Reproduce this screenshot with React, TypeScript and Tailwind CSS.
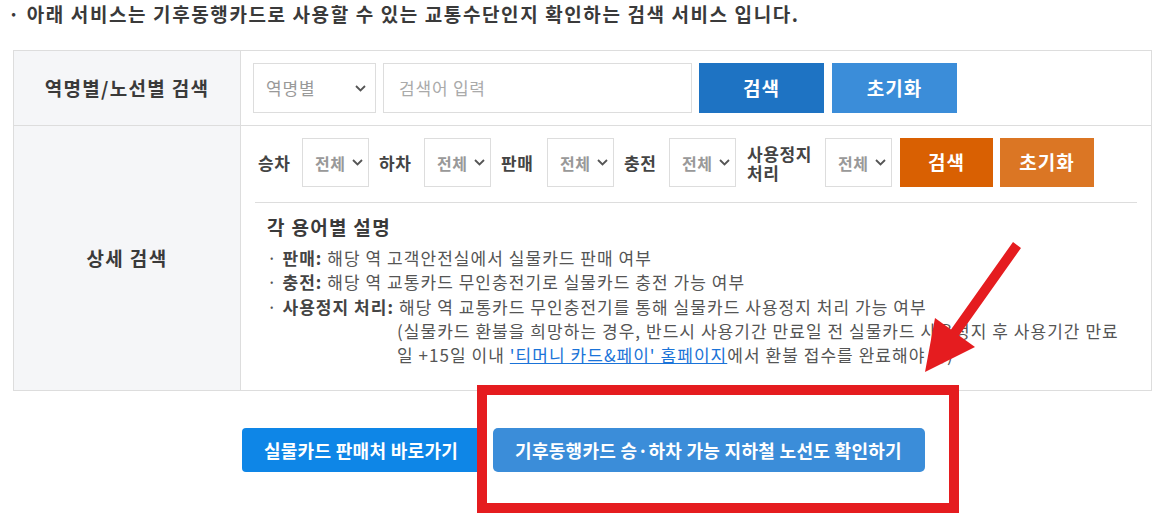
import React from "react";

const FONT = { fontFamily: "'Noto Sans CJK KR', 'Malgun Gothic', 'Noto Sans', sans-serif" };

function Chevron() {
  return (
    <svg width="11" height="7" viewBox="0 0 11 7">
      <path d="M1 1l4.5 4.5L10 1" fill="none" stroke="#555" strokeWidth="1.8" />
    </svg>
  );
}

function SmallSelect() {
  return (
    <div className="flex h-[49px] w-[67px] shrink-0 items-center justify-between border border-[#dddddd] bg-white pl-[12px] pr-[5px]">
      <span className="text-[16px] tracking-[0.5px] text-[#999999]">전체</span>
      <Chevron />
    </div>
  );
}

export default function App() {
  return (
    <div style={FONT} className="relative h-[513px] w-[1166px] overflow-hidden bg-white text-[#333333]">
      <p className="pl-[8px] pt-[1px] text-[19px] font-semibold leading-[26px] tracking-[1.6px] text-[#3a3a3a]">
        · 아래 서비스는 기후동행카드로 사용할 수 있는 교통수단인지 확인하는 검색 서비스 입니다.
      </p>

      <div className="mx-[13px] mt-[23px] w-[1139px] border border-[#dddddd]">
        <div className="grid grid-cols-[227px_1fr] border-b border-[#dddddd]">
          <div className="flex items-center justify-center border-r border-[#dddddd] bg-[#f5f6f8] text-[19px] font-bold tracking-[1.3px] text-[#3a3a3a]">
            역명별/노선별 검색
          </div>
          <div className="flex items-center gap-[7px] py-[12px] pl-[12px]">
            <div className="flex h-[50px] w-[123px] items-center justify-between border border-[#dddddd] pl-[12px] pr-[9px]">
              <span className="text-[17px] tracking-[0.8px] text-[#999999]">역명별</span>
              <Chevron />
            </div>
            <div className="flex h-[50px] w-[309px] items-center border border-[#dddddd] pl-[15px]">
              <span className="text-[17px] tracking-[0.8px] text-[#aaaaaa]">검색어 입력</span>
            </div>
            <button className="h-[50px] w-[125px] bg-[#1e73c3] text-[19px] font-bold tracking-[1px] text-white">검색</button>
            <button className="ml-[1px] h-[50px] w-[125px] bg-[#3b8dd9] text-[19px] font-bold tracking-[1px] text-white">초기화</button>
          </div>
        </div>
        <div className="grid grid-cols-[227px_1fr]">
          <div className="flex items-center justify-center border-r border-[#dddddd] bg-[#f5f6f8] text-[19px] font-bold tracking-[1.4px] text-[#3a3a3a]">
            상세 검색
          </div>
          <div className="px-[14px] pt-[12px] pb-[23px]">
            <div className="flex items-center border-b border-[#dddddd] pb-[15px] pl-[3px] text-[17px] font-semibold tracking-[0.6px] text-[#444444]">
              <span className="w-[44px] shrink-0">승차</span>
              <SmallSelect />
              <span className="ml-[10px] w-[45px] shrink-0">하차</span>
              <SmallSelect />
              <span className="ml-[10px] w-[46px] shrink-0">판매</span>
              <SmallSelect />
              <span className="ml-[10px] w-[45px] shrink-0">충전</span>
              <SmallSelect />
              <span className="ml-[11px] w-[78px] shrink-0 leading-[19px]">
                사용정지
                <br />
                처리
              </span>
              <SmallSelect />
              <button className="ml-[8px] h-[49px] w-[93px] shrink-0 bg-[#d96002] text-[19px] font-bold tracking-[1px] text-white">검색</button>
              <button className="ml-[7px] h-[49px] w-[94px] shrink-0 bg-[#db7624] text-[19px] font-bold tracking-[1px] text-white">초기화</button>
            </div>
            <div className="pl-[12px] pt-[12px] text-[17px] leading-[24.3px] tracking-[1.05px] text-[#555555]">
              <p className="mb-[7px] text-[19px] font-bold leading-[24px] tracking-[1.3px] text-[#3a3a3a]">각 용어별 설명</p>
              <p>
                · <b className="font-semibold text-[#444444]">판매:</b> 해당 역 고객안전실에서 실물카드 판매 여부
              </p>
              <p>
                · <b className="font-semibold text-[#444444]">충전:</b> 해당 역 교통카드 무인충전기로 실물카드 충전 가능 여부
              </p>
              <p>
                · <b className="font-semibold text-[#444444]">사용정지 처리:</b> 해당 역 교통카드 무인충전기를 통해 실물카드 사용정지 처리 가능 여부
              </p>
              <p className="pl-[130px]">
                (실물카드 환불을 희망하는 경우, 반드시 사용기간 만료일 전 실물카드 사용정지 후 사용기간 만료
                <br />
                일 +15일 이내 <a className="text-[#1a73d8] underline">'티머니 카드&amp;페이' 홈페이지</a>에서 환불 접수를 완료해야 함)
              </p>
            </div>
          </div>
        </div>
      </div>

      <div className="mt-[37px] flex justify-center gap-[12px]">
        <button className="h-[44px] w-[239px] rounded-[4px] bg-[#0e86e7] text-[18px] font-bold tracking-[0.3px] text-white">
          실물카드 판매처 바로가기
        </button>
        <button className="h-[44px] w-[432px] rounded-[5px] bg-[#3b8dd9] text-[18px] font-bold tracking-[0.3px] text-white">
          기후동행카드 승·하차 가능 지하철 노선도 확인하기
        </button>
      </div>

      <div className="pointer-events-none absolute left-[477px] top-[385px] h-[128px] w-[482px] border-[10px] border-b-0 border-[#e51c1f]" />
      <div className="pointer-events-none absolute left-[477px] top-[503px] h-[10px] w-[482px] bg-[#e51c1f]" />

      <svg className="pointer-events-none absolute left-0 top-0" width="1166" height="513">
        <polygon
          points="1013,242 951,329.6 935,318 925,372 975,347 959,335.4 1021,248"
          fill="#e51c1f"
        />
      </svg>
    </div>
  );
}
